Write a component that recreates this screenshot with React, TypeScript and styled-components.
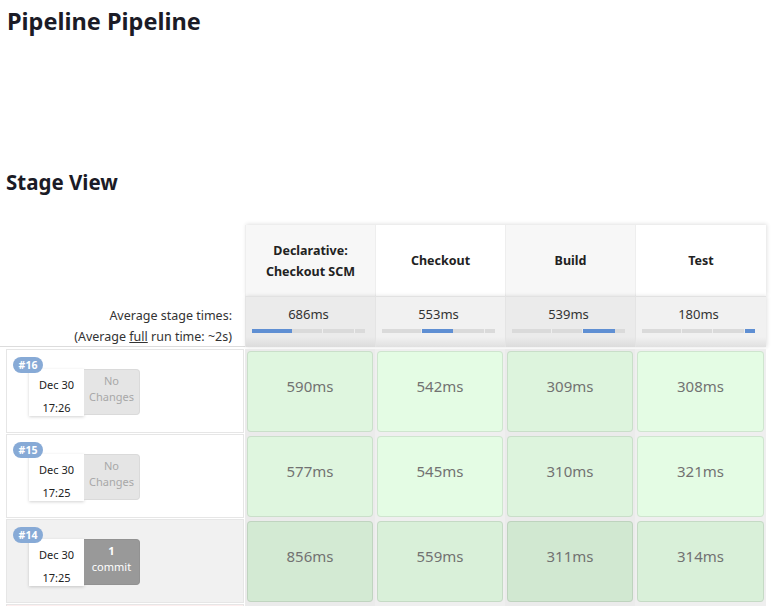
import React from "react";
import styled, { createGlobalStyle } from "styled-components";

const Global = createGlobalStyle`
  html, body { margin: 0; padding: 0; background: #fff; }
  body { font-family: "Noto Sans", "Open Sans", sans-serif; color: #1a1a22; overflow: hidden; }
  * { box-sizing: border-box; }
`;

const Page = styled.div`
  width: 775px;
  height: 606px;
  overflow: hidden;
`;

const Title = styled.h1`
  margin: 0;
  padding: 6px 0 0 7px;
  font-size: 23.5px;
  line-height: 30px;
  font-weight: 700;
  color: #1b1b26;
`;

const SectionTitle = styled.h2`
  margin: 133px 0 0 6px;
  font-size: 20.5px;
  line-height: 26px;
  font-weight: 700;
  color: #1b1b26;
`;

const Table = styled.div`
  margin-top: 30px;
  display: flex;
  flex-direction: column;
`;

const Row = styled.div`
  display: flex;
`;

const LeftHead = styled.div`
  width: 245px;
  flex: none;
`;

const StageHeads = styled.div`
  display: flex;
  box-shadow: 1px -1px 4px rgba(0, 0, 0, 0.12);
`;

const StageHead = styled.div<{ $odd: boolean; $w: number }>`
  width: ${(p) => p.$w}px;
  height: 71px;
  display: flex;
  align-items: center;
  justify-content: center;
  text-align: center;
  font-size: 12.5px;
  line-height: 21px;
  font-weight: 700;
  color: #222;
  background: ${(p) => (p.$odd ? "#f7f7f7" : "#ffffff")};
  border-left: 1px solid #eeeeee;
`;

const AvgLabel = styled.div`
  width: 245px;
  flex: none;
  height: 51px;
  padding: 9px 13px 0 0;
  text-align: right;
  font-size: 12.5px;
  line-height: 21px;
  color: #333;
  border-bottom: 1px solid #dcdcdc;
  span { text-decoration: underline; }
`;

const AvgCells = styled.div`
  display: flex;
  box-shadow: 1px 0 4px rgba(0, 0, 0, 0.12);
`;

const AvgCell = styled.div<{ $odd: boolean; $w: number }>`
  width: ${(p) => p.$w}px;
  height: 51px;
  padding: 8px 0 0 6px;
  background: ${(p) =>
    p.$odd
      ? "linear-gradient(to bottom, #ebebeb 0%, #ebebeb 80%, #dcdcdc 100%)"
      : "linear-gradient(to bottom, #f1f1f1 0%, #f1f1f1 80%, #e0e0e0 100%)"};
  border-left: 1px solid #e4e4e4;
  border-top: 1px solid #e2e2e2;
`;

const AvgTime = styled.div`
  width: 113px;
  text-align: center;
  font-size: 13px;
  line-height: 18px;
  color: #333;
`;

const Bar = styled.div`
  margin-top: 6px;
  width: 113px;
  height: 4px;
  display: flex;
  background: #dcdcdc;
`;

const Seg = styled.div<{ $active: boolean }>`
  height: 4px;
  background: ${(p) => (p.$active ? "#5f8fd3" : "#dadada")};
  border-right: 1px solid ${(p) => (p.$active ? "#5f8fd3" : "#eeeeee")};
  &:last-child { border-right: 0; }
`;

const Body = styled.div`
  margin-top: 2px;
  display: flex;
  flex-direction: column;
`;

const BuildRow = styled.div`
  display: flex;
  height: 85px;
`;

const BuildCell = styled.div<{ $tone: "white" | "grey" | "pink" }>`
  position: relative;
  width: 238px;
  flex: none;
  margin: 0 1px 1px 6px;
  border: 1px solid #e6e6e6;
  background: ${(p) => (p.$tone === "grey" ? "#f1f1f1" : p.$tone === "pink" ? "#fdeeee" : "#ffffff")};
`;

const Badge = styled.div`
  position: absolute;
  left: 6px;
  top: 7px;
  z-index: 2;
  width: 30px;
  height: 16px;
  border-radius: 8px;
  background: #87aad6;
  color: #fff;
  font-size: 10.5px;
  line-height: 16px;
  font-weight: 700;
  text-align: center;
`;

const Stamp = styled.div`
  position: absolute;
  left: 22px;
  top: 19px;
  display: flex;
`;

const DateBox = styled.div`
  width: 55px;
  height: 47px;
  background: #fff;
  box-shadow: 0 1px 3px rgba(0, 0, 0, 0.18);
  display: flex;
  flex-direction: column;
  align-items: center;
  padding-top: 4px;
  font-size: 11px;
  line-height: 23px;
  color: #222;
`;

const Changes = styled.div<{ $has: boolean }>`
  width: 56px;
  height: 46px;
  border-radius: 0 4px 4px 0;
  background: ${(p) => (p.$has ? "#999999" : "#e5e5e5")};
  border: 1px solid ${(p) => (p.$has ? "#929292" : "#dadada")};
  border-left: 0;
  color: ${(p) => (p.$has ? "#ffffff" : "#a8a8a8")};
  display: flex;
  flex-direction: column;
  align-items: center;
  padding-top: 3px;
  font-size: 11px;
  line-height: 16px;
  b { font-weight: 700; }
`;

const StageCol = styled.div<{ $odd: boolean; $w: number }>`
  width: ${(p) => p.$w}px;
  flex: none;
  padding: 2px;
  background: ${(p) => (p.$odd ? "#ebebeb" : "#efefef")};
`;

const StageBox = styled.div<{ $bg: string }>`
  height: 81px;
  border: 1px solid rgba(0, 0, 0, 0.09);
  border-radius: 4px;
  background: ${(p) => p.$bg};
  text-align: center;
  padding-top: 23px;
  font-size: 15px;
  line-height: 22px;
  color: #727272;
`;

type Tone = "white" | "grey" | "pink";

type Build = {
  id: number;
  time: string;
  changes: number;
  tone: Tone;
  durations: string[];
};

const stages = [
  { name: ["Declarative:", "Checkout SCM"], avg: "686ms", ms: 686 },
  { name: ["Checkout"], avg: "553ms", ms: 553 },
  { name: ["Build"], avg: "539ms", ms: 539 },
  { name: ["Test"], avg: "180ms", ms: 180 },
];

const widths = [130, 130, 130, 131];

const builds: Build[] = [
  { id: 16, time: "17:26", changes: 0, tone: "white", durations: ["590ms", "542ms", "309ms", "308ms"] },
  { id: 15, time: "17:25", changes: 0, tone: "white", durations: ["577ms", "545ms", "310ms", "321ms"] },
  { id: 14, time: "17:25", changes: 1, tone: "grey", durations: ["856ms", "559ms", "311ms", "314ms"] },
];

const greens: Record<Tone, string[]> = {
  white: ["#dff6df", "#e4fce4", "#ddf4dd", "#e4fce4"],
  grey: ["#d3ead3", "#d9f0d9", "#d1e8d1", "#d9f0d9"],
  pink: ["#f6dede", "#fbe4e4", "#f4dcdc", "#fbe4e4"],
};

const total = stages.reduce((s, x) => s + x.ms, 0);

export default function App() {
  return (
    <Page>
      <Global />
      <Title>Pipeline Pipeline</Title>
      <SectionTitle>Stage View</SectionTitle>
      <Table>
        <Row>
          <LeftHead />
          <StageHeads>
            {stages.map((s, i) => (
              <StageHead key={i} $odd={i % 2 === 0} $w={widths[i]}>
                <div>
                  {s.name.map((l) => (
                    <div key={l}>{l}</div>
                  ))}
                </div>
              </StageHead>
            ))}
          </StageHeads>
        </Row>
        <Row>
          <AvgLabel>
            Average stage times:
            <br />
            (Average <span>full</span> run time: ~2s)
          </AvgLabel>
          <AvgCells>
            {stages.map((s, i) => (
              <AvgCell key={i} $odd={i % 2 === 0} $w={widths[i]}>
                <AvgTime>{s.avg}</AvgTime>
                <Bar>
                  {stages.map((t, j) => (
                    <Seg key={j} $active={j === i} style={{ width: `${(t.ms / total) * 113}px` }} />
                  ))}
                </Bar>
              </AvgCell>
            ))}
          </AvgCells>
        </Row>
        <Body>
          {builds.map((b) => (
            <BuildRow key={b.id}>
              <BuildCell $tone={b.tone}>
                <Badge>#{b.id}</Badge>
                <Stamp>
                  <DateBox>
                    <div>Dec 30</div>
                    <div>{b.time}</div>
                  </DateBox>
                  <Changes $has={b.changes > 0}>
                    {b.changes > 0 ? (
                      <>
                        <b>{b.changes}</b>
                        <div>commit</div>
                      </>
                    ) : (
                      <>
                        <div>No</div>
                        <div>Changes</div>
                      </>
                    )}
                  </Changes>
                </Stamp>
              </BuildCell>
              {b.durations.map((d, i) => (
                <StageCol key={i} $odd={i % 2 === 0} $w={widths[i]}>
                  <StageBox $bg={greens[b.tone][i]}>{d}</StageBox>
                </StageCol>
              ))}
            </BuildRow>
          ))}
          <BuildRow>
            <BuildCell $tone="pink" />
            {widths.map((w, i) => (
              <StageCol key={i} $odd={i % 2 === 0} $w={w}>
                <StageBox $bg={greens.pink[i]} />
              </StageCol>
            ))}
          </BuildRow>
        </Body>
      </Table>
    </Page>
  );
}
